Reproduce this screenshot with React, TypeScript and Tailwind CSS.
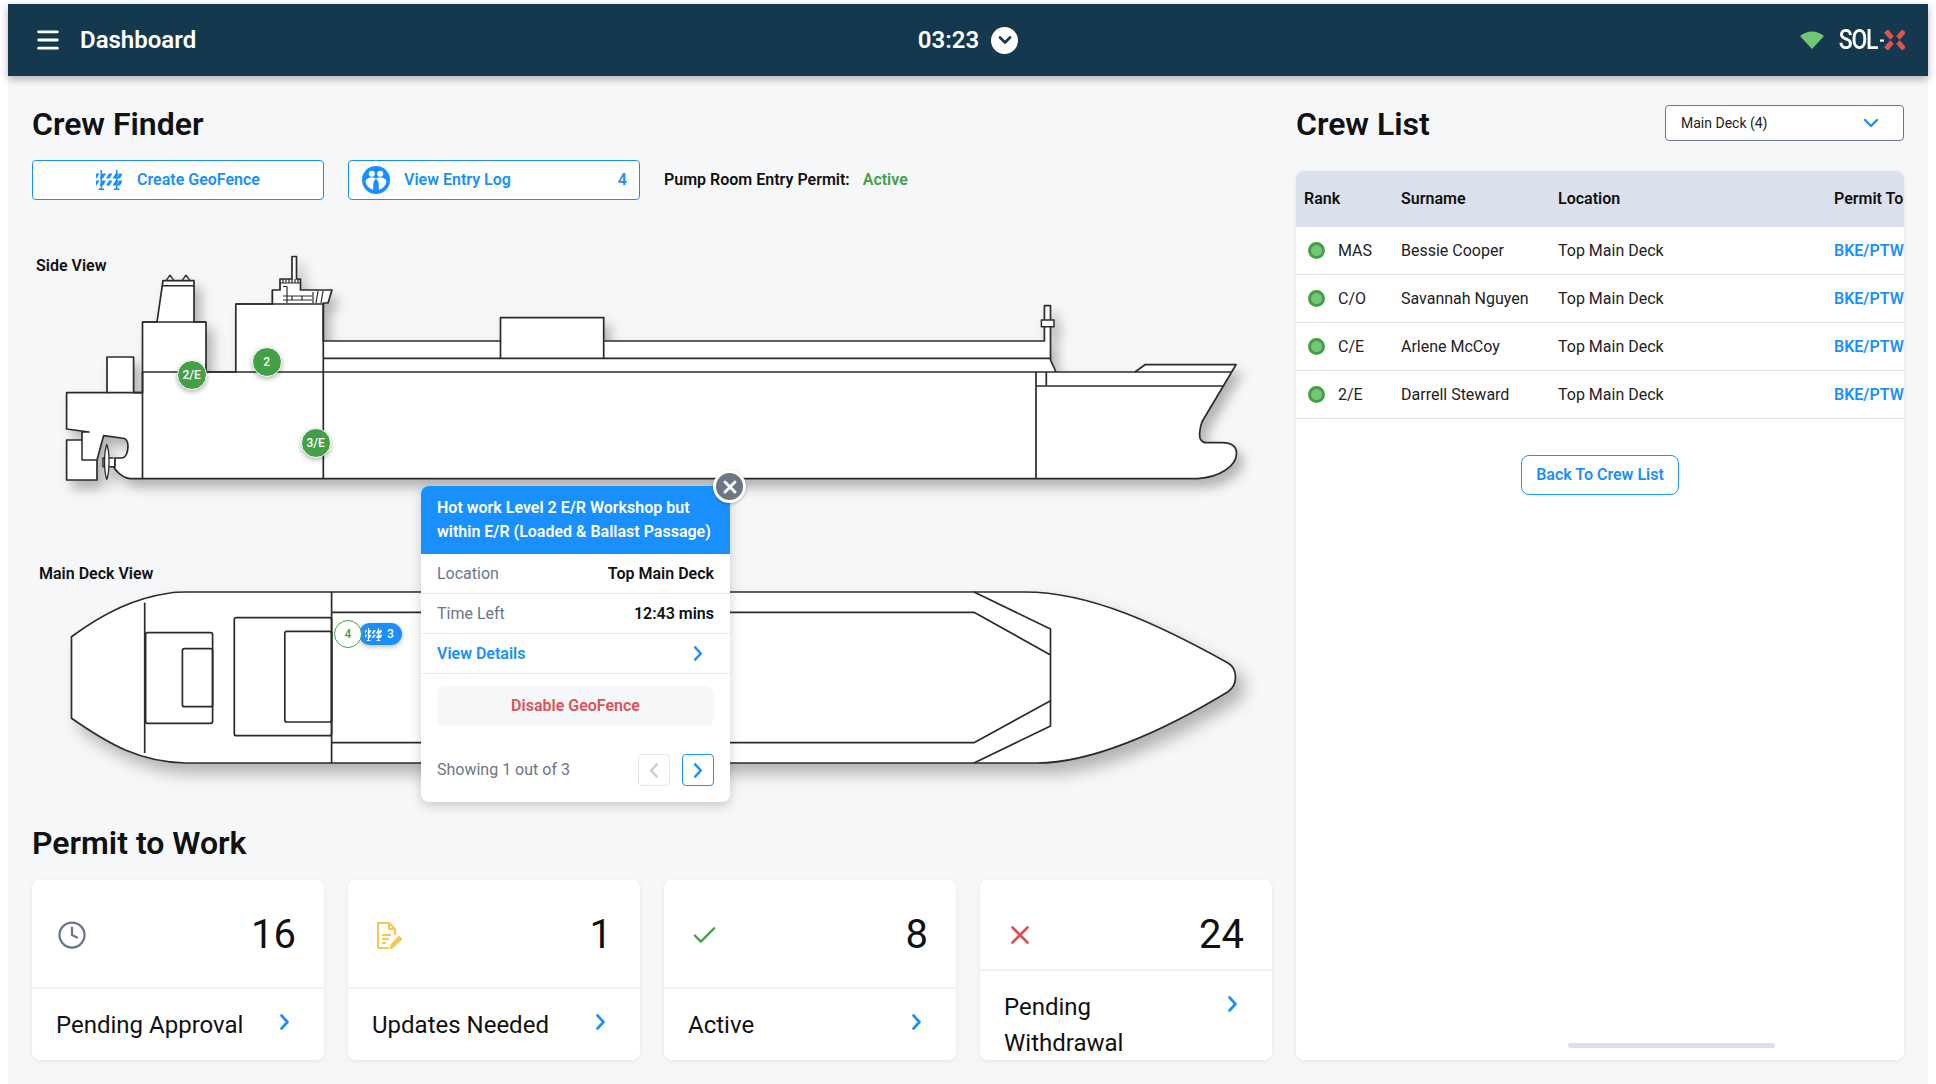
// Crew Finder dashboard: ship views, permit cards and crew list.
import { Check, ChevronDown, Clock, Menu, X } from 'lucide-react';

const BLUE = '#1a8fff';

const crew = [
  { rank: 'MAS', name: 'Bessie Cooper' },
  { rank: 'C/O', name: 'Savannah Nguyen' },
  { rank: 'C/E', name: 'Arlene McCoy' },
  { rank: '2/E', name: 'Darrell Steward' },
];

function Chevron({ dir = 'right', color = BLUE, className = 'w-[10px] h-[15px]' }: { dir?: 'left' | 'right'; color?: string; className?: string }) {
  return (
    <svg viewBox="0 0 10 16" className={className} fill="none" stroke={color} strokeWidth="2.600" strokeLinecap="round" strokeLinejoin="round">
      <path d={dir === 'right' ? 'M2 1.500 8 8l-6 6.500' : 'M8 1.500 2 8l6 6.500'} />
    </svg>
  );
}

function Barrier({ color = BLUE, className = '' }: { color?: string; className?: string }) {
  return (
    <svg viewBox="0 0 26 20" className={className} fill={color}>
      <rect x="4.500" y="0" width="1.600" height="20" />
      <rect x="19.900" y="0" width="1.600" height="20" />
      <rect x="2.500" y="18.400" width="5.600" height="1.600" />
      <rect x="17.900" y="18.400" width="5.600" height="1.600" />
      <path d="M0 3.500h3.500l-3 5H0zM6.500 3.500h3.500l-3 5H3.500zM13 3.500h3.500l-3 5H10zM19.500 3.500H23l-3 5h-3.500zM26 3.500v1.500l-2 3.500h-3.500l3-5z" />
      <path d="M0 10.500h3.500l-3 5H0zM6.500 10.500h3.500l-3 5H3.500zM13 10.500h3.500l-3 5H10zM19.500 10.500H23l-3 5h-3.500zM26 10.500V12l-2 3.500h-3.500l3-5z" />
    </svg>
  );
}

function PeopleIcon() {
  return (
    <svg viewBox="0 0 28 28" className="w-7 h-7 shrink-0">
      <circle cx="14" cy="14" r="14" fill={BLUE} />
      <circle cx="9.800" cy="7.800" r="3" fill="#fff" />
      <circle cx="18.200" cy="7.800" r="3" fill="#fff" />
      <path d="M3.600 16c0-3 2.900-4.500 6-4.500 1.800 0 3.200.4 4.400 1.300-1.800 1.400-2.800 3.500-2.800 6v5a11 11 0 0 1-7.600-7.800z" fill="#fff" />
      <path d="M24.400 16c0-3-2.900-4.500-6-4.500-1.800 0-3.200.4-4.400 1.300 1.800 1.400 2.800 3.500 2.800 6v5a11 11 0 0 0 7.600-7.800z" fill="#fff" />
    </svg>
  );
}

function UpdatesIcon() {
  return (
    <svg viewBox="0 0 25 27" className="w-[25px] h-[27px]" fill="none" stroke="#f6c64f" strokeWidth="2.200" strokeLinejoin="round">
      <path d="M18 13V7l-6-6H2a1 1 0 0 0-1 1v23a1 1 0 0 0 1 1h10" />
      <path d="M12 1v6h6" />
      <path d="M5 13h9M5 17h7M5 21h4" />
      <path d="M15 25.500l-1 .5.500-3 7.500-8 2 2z" fill="#f6c64f" />
    </svg>
  );
}

// Page coordinates: the viewBox starts where the canvas sits on the page.
function ShipDrawing() {
  return (
    <svg viewBox="32 220 1240 600" className="absolute inset-0 w-[1240px] h-[600px]" fill="none" stroke="#2b2b2b" strokeWidth="1.700" strokeLinejoin="round">
      {/* side view */}
      <g className="drop-shadow-[6px_8px_6px_rgba(0,0,0,0.28)]">
        <path
          fill="#fff"
          d="M66.600 392.700H107V357h26.600v35.700h8.900V322H157L163 280.700H194V322H206V372H235.800V304H272.400V290H280V279H292V256.500H296.500V279H300.500V290H332L328 303H323.300V341H500.500V317.700H603.700V341H1044.400V305.700H1050.500V341L1050.500 360L1056 372H1135L1145 364.700H1236L1202 421.700C1199 430 1199 438 1201 440C1203 443 1205 442.700 1207 442.700H1222C1232 442.700 1237 447 1236.500 454C1236 466 1220 477 1197.500 478.700H130.400C122 478 115 470 113.500 466.700H114.800V458H121.500C126 458 128 452 128 446C128 440 125 438 121.500 438L103.600 435.700L97 460V480H66.600V440H82V432H89L66.600 429Z"
        />
        <path d="M107 392.700h35.500M142.500 322H206M235.800 304H323.300M142.500 372V478.700M142.500 372H1056M323.300 304V478.700M323.300 358.300H1050.500M500.500 341V358.300M603.700 341V358.300M1036 372V478.700M1046.300 372V386M1036 386H1223.500M1231 372H1135" />
        <path d="M163 285.700H194M166 280.700l4-5.500 4 5.500M182 280.700l4-5.500 4 5.500" strokeWidth="1.400" />
        <path d="M280 283h20M283 279v4M286 279v4M289 279v4M292 279v4M295 279v4M298 279v4M272.400 290V303M283 286.500h4V303M283 296h29M283 300h29M292 296v4M302 296v4M313 292v11M318 291l-2 12M323 291l-2 12" strokeWidth="1.200" />
        <path d="M1041.400 320h12.600v6.700h-12.600zM82 440v20h15M113.500 458H103V466.700H114.800V458" fill="#fff" strokeWidth="1.500" />
        <path d="M106.800 444.500c-3 8-3 26 0 35 3-9 3-27 0-35z" fill="#fff" strokeWidth="1.300" />
      </g>

      {/* main deck view */}
      <g className="drop-shadow-[8px_10px_8px_rgba(0,0,0,0.28)]">
        <path
          fill="#fff"
          d="M71.500 636.700C105 612 135 598 170 593C175 592 180 592 185.700 592H1025C1090 592 1160 625 1228 663C1238 669 1238 685 1228 691.700C1160 733 1090 763 1037 763H185.700C140 762 110 745 71.500 718.300Z"
        />
        <path d="M144.700 602.700V753M331.600 592V763M331.600 612.300H974L1050.500 655M331.600 742.700H974L1050.500 700.700M974 592L1050.500 629V726L974 763" />
        <rect x="145.600" y="632.700" width="67" height="90.600" rx="2" />
        <rect x="182.400" y="648.700" width="30.200" height="58" rx="2" />
        <rect x="234.300" y="617.700" width="97.300" height="118" rx="2" />
        <rect x="284.800" y="631.300" width="46.800" height="90.700" rx="2" />
      </g>
    </svg>
  );
}

function CrewPin({ label, left, top }: { label: string; left: number; top: number }) {
  return (
    <div
      className="absolute w-[30px] h-[30px] rounded-full bg-[#43a047] border border-white flex items-center justify-center text-white text-[12px] font-medium shadow-[0_2px_5px_rgba(0,0,0,0.3)]"
      style={{ left: left - 15, top: top - 15 }}
    >
      {label}
    </div>
  );
}

function InfoRow({ label, value }: { label: string; value: string }) {
  return (
    <div className="h-10 px-4 flex items-center justify-between border-b border-[#e3e6ee]">
      <span className="text-[#6b7785]">{label}</span>
      <span className="font-semibold text-[#111]">{value}</span>
    </div>
  );
}

function GeoFencePopup() {
  return (
    <div className="absolute left-[389px] top-[266px] w-[309px] h-[316px] bg-white rounded-[8px] shadow-[0_4px_12px_rgba(0,0,0,0.18)]">
      <div className="h-[68px] px-4 flex items-center bg-[#1a8fff] rounded-t-[8px] text-white font-semibold leading-[24px] whitespace-nowrap">
        <span>Hot work Level 2 E/R Workshop but<br />within E/R (Loaded &amp; Ballast Passage)</span>
      </div>
      <InfoRow label="Location" value="Top Main Deck" />
      <InfoRow label="Time Left" value="12:43 mins" />
      <div className="h-10 pl-4 pr-[27px] flex items-center justify-between border-b border-[#e3e6ee] text-[#1a8fff] font-semibold">
        View Details
        <Chevron />
      </div>
      <div className="mx-4 mt-3 h-10 rounded-[8px] bg-[#f6f7f9] flex items-center justify-center font-semibold text-[#e05252]">
        Disable GeoFence
      </div>
      <div className="mx-4 mt-7 flex items-center justify-between">
        <span className="text-[#6b7785]">Showing 1 out of 3</span>
        <div className="flex gap-3">
          <div className="w-8 h-8 rounded-[4px] border border-[#e3e6ee] flex items-center justify-center">
            <Chevron dir="left" color="#c5d0de" />
          </div>
          <div className="w-8 h-8 rounded-[4px] border border-[#1a8fff] flex items-center justify-center">
            <Chevron />
          </div>
        </div>
      </div>
      <div className="absolute -right-[16px] -top-[16px] w-[33px] h-[33px] rounded-full bg-[#6b7785] border-[3px] border-white flex items-center justify-center shadow-[0_1px_3px_rgba(0,0,0,0.3)]">
        <X size={20} color="#fff" strokeWidth={3.500} />
      </div>
    </div>
  );
}

function StatCard({ icon, count, label, iconClass, twoLine }: { icon: React.ReactNode; count: number; label: React.ReactNode; iconClass: string; twoLine?: boolean }) {
  return (
    <div className="h-[180px] bg-white rounded-[8px] shadow-[0_1px_4px_rgba(0,0,0,0.08)] overflow-hidden">
      <div className={`${twoLine ? 'h-[91px]' : 'h-[109px]'} pt-[32px] pr-[28px] flex items-start justify-between border-b-2 border-[#f0f1f6]`}>
        <div className={`h-[46px] flex items-center ${iconClass}`}>{icon}</div>
        <span className="text-[40px] leading-[46px] text-[#111]">{count}</span>
      </div>
      <div className="pl-[24px] pr-[34px] pt-[18px] flex justify-between text-[24px] leading-[36px] text-[#111]">
        <span>{label}</span>
        <Chevron className="mt-[7px] w-[11px] h-[16px]" />
      </div>
    </div>
  );
}

export default function App() {
  return (
    <div className="w-[1936px] h-[1084px] bg-white pt-1 px-2 overflow-hidden font-['Roboto',sans-serif] text-[16px]">
      <div className="h-[1080px] bg-[#f6f7f9]">
        <header className="relative h-[72px] bg-[#14394f] text-white grid grid-cols-3 items-center shadow-[0_3px_8px_rgba(0,0,0,0.3)]">
          <div className="pl-[26px] flex items-center gap-[18px]">
            <Menu size={28} strokeWidth={2.400} />
            <span className="text-[24px] font-semibold">Dashboard</span>
          </div>
          <div className="flex items-center justify-center gap-[12px]">
            <span className="text-[24px] font-semibold">03:23</span>
            <span className="w-[27px] h-[27px] rounded-full bg-white flex items-center justify-center">
              <ChevronDown size={20} color="#14394f" strokeWidth={3.200} />
            </span>
          </div>
          <div className="pr-[23px] flex items-center justify-end">
            <svg viewBox="0 0 24 18" className="w-6 h-[18px] mr-[8px]">
              <path d="M0 5C7-1 17-1 24 5L12 18z" fill="#72c675" />
            </svg>
            <span className="text-[27px] leading-none font-medium tracking-[-1.500px] scale-x-[0.85] origin-right">SOL</span>
            <svg viewBox="0 0 28 20" className="w-7 h-5">
              <rect x="3" y="9.500" width="4" height="2.200" fill="#fff" />
              <path d="M9 1l6 7M27 1l-6 7M9 19l6-7M27 19l-6-7" stroke="#e05252" strokeWidth="5" fill="none" />
            </svg>
          </div>
        </header>

        <div className="pl-6 flex gap-6">
          <main className="w-[1240px]">
            <h1 className="pt-[28px] h-[68px] text-[32px] leading-[40px] font-semibold text-[#111]">Crew Finder</h1>
            <div className="mt-[16px] grid grid-cols-4 gap-6 font-semibold text-[#1a8fff]">
              <div className="h-10 bg-white rounded-[4px] border border-[#1a8fff] flex items-center justify-center gap-[15px]">
                <Barrier className="w-[26px] h-5" />
                Create GeoFence
              </div>
              <div className="h-10 bg-white rounded-[4px] border border-[#1a8fff] flex items-center pl-[13px] pr-[12px] gap-[14px]">
                <PeopleIcon />
                <span className="flex-1">View Entry Log</span>
                4
              </div>
              <div className="col-span-2 flex items-center gap-[13px] text-[#111]">
                Pump Room Entry Permit:
                <span className="text-[#43a047]">Active</span>
              </div>
            </div>

            <div className="relative h-[600px] mt-5">
              <ShipDrawing />
              <span className="absolute left-1 top-[34px] font-semibold text-[#111]">Side View</span>
              <span className="absolute left-[7px] top-[342px] font-semibold text-[#111]">Main Deck View</span>
              <CrewPin label="2/E" left={159.600} top={155} />
              <CrewPin label="2" left={234.600} top={142} />
              <CrewPin label="3/E" left={283.700} top={223} />
              <div className="absolute left-[327px] top-[403px] h-[22px] w-[43px] pl-[6px] rounded-full bg-[#1a8fff] flex items-center gap-[5px] text-white text-[12px] font-medium shadow-[0_2px_5px_rgba(0,0,0,0.25)]">
                <Barrier color="#fff" className="w-[17px] h-[13px] shrink-0" />
                3
              </div>
              <div className="absolute left-[302px] top-[400px] w-[28px] h-[28px] rounded-full bg-white border border-[#43a047] flex items-center justify-center text-[12px] font-medium text-[#43a047]">
                4
              </div>
              <GeoFencePopup />
            </div>

            <h2 className="mt-[3px] text-[32px] leading-[40px] font-semibold text-[#111]">Permit to Work</h2>
            <div className="mt-[17px] grid grid-cols-4 gap-6">
              <StatCard icon={<Clock size={30} color="#6b7785" strokeWidth={1.800} />} iconClass="pl-[25px]" count={16} label="Pending Approval" />
              <StatCard icon={<UpdatesIcon />} iconClass="pl-[29px]" count={1} label="Updates Needed" />
              <StatCard icon={<Check size={29} color="#43a047" strokeWidth={2} />} iconClass="pl-[26px]" count={8} label="Active" />
              <StatCard icon={<X size={30} color="#e05252" strokeWidth={2.200} />} iconClass="pl-[25px]" count={24} label={<>Pending<br />Withdrawal</>} twoLine />
            </div>
          </main>

          <aside className="w-[608px]">
            <div className="pt-[28px] h-[95px] flex items-start justify-between">
              <h2 className="text-[32px] leading-[40px] font-semibold text-[#111]">Crew List</h2>
              <div className="mt-[1px] w-[239px] h-9 pl-[15px] pr-[20px] bg-white border border-[#6b7785] rounded-[4px] flex items-center justify-between text-[14px] text-[#222]">
                Main Deck (4)
                <ChevronDown size={24} color={BLUE} strokeWidth={2.400} />
              </div>
            </div>
            <div className="relative h-[889px] bg-white rounded-[8px] shadow-[0_1px_4px_rgba(0,0,0,0.08)] overflow-hidden whitespace-nowrap">
              <div className="h-14 bg-[#dbe1ec] grid grid-cols-[105px_157px_276px_70px] items-center font-semibold text-[#111]">
                <span className="pl-2">Rank</span>
                <span>Surname</span>
                <span>Location</span>
                <span>Permit To</span>
              </div>
              {crew.map(c => (
                <div key={c.rank} className="h-12 border-b border-[#dbe1ec] grid grid-cols-[105px_157px_276px_70px] items-center text-[#222]">
                  <span className="pl-3 flex items-center gap-[13px]">
                    <span className="w-[17px] h-[17px] rounded-full bg-[#72c675] border-[3px] border-[#43a047]" />
                    {c.rank}
                  </span>
                  <span>{c.name}</span>
                  <span>Top Main Deck</span>
                  <span className="font-semibold text-[#1a8fff]">BKE/PTW/2021</span>
                </div>
              ))}
              <div className="mt-[36px] flex justify-center">
                <div className="h-10 w-[158px] rounded-[8px] border border-[#1a8fff] flex items-center justify-center font-semibold text-[#1a8fff]">
                  Back To Crew List
                </div>
              </div>
              <div className="absolute left-[272px] bottom-[12px] w-[207px] h-[5px] rounded-full bg-[#dbe1ec]" />
            </div>
          </aside>
        </div>
      </div>
    </div>
  );
}
